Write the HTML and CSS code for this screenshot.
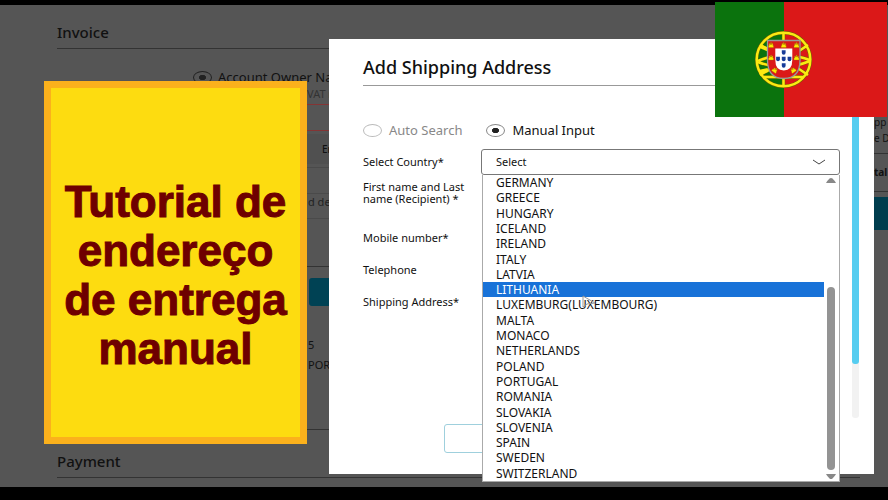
FILE: index.html
```html
<!DOCTYPE html>
<html lang="en">
<head>
<meta charset="utf-8">
<title>Add Shipping Address</title>
<link rel="stylesheet" href="styles.css">
</head>
<body>
<div class="page">
  <main class="checkout">
    <h2 class="section-title">Invoice</h2>
    <form class="invoice">
      <label class="owner"><input class="radio" type="radio" name="owner" checked> Account Owner Name</label>
      <p class="hint">VAT <b>number</b></p>
      <input class="vat" type="text" aria-label="VAT">
      <button class="enter" type="button">Enter</button>
      <div class="box"></div>
      <p class="note">d delivery</p>
      <div class="spacer"></div>
      <button class="primary" type="button" aria-label="Add"></button>
      <address class="address">5<br>PORTUGAL</address>
    </form>
    <h2 class="section-title">Payment</h2>
  </main>
  <aside class="summary">
    <p>pp</p>
    <p>e D</p>
    <p class="total">tal</p>
    <button class="order" type="button" aria-label="Order"></button>
  </aside>
</div>

<section class="modal" role="dialog" aria-labelledby="modal-title">
  <h1 class="modal-title" id="modal-title">Add Shipping Address</h1>
  <form class="shipping">
    <div class="modes">
      <label class="mode mode-off"><input class="radio" type="radio" name="mode"> Auto Search</label>
      <label class="mode"><input class="radio" type="radio" name="mode" checked> Manual Input</label>
    </div>
    <div class="row row-country">
      <label for="country">Select Country*</label>
      <div class="combo">
        <select id="country"><option>Select</option></select>
        <svg class="chevron" viewBox="0 0 14 6" aria-hidden="true"><path d="M1 1l6 4 6-4"/></svg>
        <div class="popup">
          <ul class="options" role="listbox" aria-label="Country">
            <li role="option">GERMANY</li>
            <li role="option">GREECE</li>
            <li role="option">HUNGARY</li>
            <li role="option">ICELAND</li>
            <li role="option">IRELAND</li>
            <li role="option">ITALY</li>
            <li role="option">LATVIA</li>
            <li role="option" class="active" aria-selected="true">LITHUANIA</li>
            <li role="option">LUXEMBURG(LUXEMBOURG)</li>
            <li role="option">MALTA</li>
            <li role="option">MONACO</li>
            <li role="option">NETHERLANDS</li>
            <li role="option">POLAND</li>
            <li role="option">PORTUGAL</li>
            <li role="option">ROMANIA</li>
            <li role="option">SLOVAKIA</li>
            <li role="option">SLOVENIA</li>
            <li role="option">SPAIN</li>
            <li role="option">SWEDEN</li>
            <li role="option">SWITZERLAND</li>
          </ul>
          <div class="scrollbar">
            <svg viewBox="0 0 10 5" aria-hidden="true"><path d="M0 5Q1 3 3.500 .5Q5-.5 6.500 .5Q9 3 10 5z"/></svg>
            <div class="thumb"></div>
            <svg viewBox="0 0 10 5" aria-hidden="true"><path d="M0 0Q1 2 3.500 4.500Q5 5.500 6.500 4.500Q9 2 10 0z"/></svg>
          </div>
          <svg class="cursor" viewBox="0 0 14 13" aria-hidden="true"><path d="M1 1v11l4-3 8-1z"/></svg>
        </div>
      </div>
    </div>
    <p class="row row-name">First name and Last<br>name (Recipient) *</p>
    <p class="row row-mobile">Mobile number*</p>
    <p class="row row-field">Telephone</p>
    <p class="row row-field">Shipping Address*</p>
    <button class="cancel" type="button" aria-label="Cancel"></button>
  </form>
  <div class="modal-scroll"><div class="modal-thumb"></div></div>
</section>

<section class="banner" lang="pt">
  <p>Tutorial de<br>endereço<br>de entrega<br>manual</p>
</section>

<svg class="flag" viewBox="0 0 172 115" role="img" aria-label="Portugal">
  <defs>
    <g id="castle"><path d="M-2.500 2.500v-2h.7v-2h1v1h.5v-2h.7v2h.5v-1h1v2h.6v2z" fill="#ffe900" stroke="#8c7a00" stroke-width=".3"/></g>
    <path id="quina" d="M-1.900-2.200h3.800v2.400q0 2-1.900 2t-1.900-2z"/>
  </defs>
  <path fill="#0b730d" d="M0 0h69v115H0z"/>
  <path fill="#db1818" d="M69 0h103v115H69z"/>
  <g fill="none" stroke="#6b6200" stroke-width="3.400">
    <circle cx="68.500" cy="57.500" r="26.800"/>
    <path d="M68.500 31v53M45 43Q68 56 93 73M45 73Q68 60 93 43M43 59Q68 48 95 58M43 60Q68 70 95 59M48 75h41"/>
  </g>
  <g fill="none" stroke="#fbea12" stroke-width="2.500">
    <circle cx="68.500" cy="57.500" r="26.800"/>
    <path d="M68.500 31v53M45 43Q68 56 93 73M45 73Q68 60 93 43M43 59Q68 48 95 58M43 60Q68 70 95 59M48 75h41"/>
    <path stroke-width="4" d="M45 44l9 4M44 70l9-2"/>
  </g>
  <path d="M52.500 38.500h32.500v19.500q0 18.500-16.250 18.500T52.500 58z" fill="#db1818" stroke="#999" stroke-width="1.300"/>
  <path d="M60.300 46.500h17v11.500q0 10.500-8.500 10.500t-8.500-10.500z" fill="#fff"/>
  <g fill="#173b98">
    <use href="#quina" x="68.700" y="50.500"/>
    <use href="#quina" x="63" y="57"/>
    <use href="#quina" x="68.700" y="57"/>
    <use href="#quina" x="74.500" y="57"/>
    <use href="#quina" x="68.700" y="63.500"/>
  </g>
  <use href="#castle" x="56" y="43"/>
  <use href="#castle" x="68.700" y="43"/>
  <use href="#castle" x="81.500" y="43"/>
  <use href="#castle" x="56" y="55.500"/>
  <use href="#castle" x="81.500" y="55.500"/>
  <use href="#castle" transform="translate(60 68) rotate(35)"/>
  <use href="#castle" transform="translate(78 68) rotate(-35)"/>
</svg>
</body>
</html>
```
FILE: styles.css
```css
* {
  box-sizing: border-box;
}

body {
  margin: 0;
  min-height: 100vh;
  padding: 5px 0 13px;
  display: flex;
  flex-direction: column;
  position: relative;
  overflow: hidden;
  background: #000;
  color: #111;
  font: 11px/16px "Noto Sans", sans-serif;
}

p, ul, h1, h2 {
  margin: 0;
  padding: 0;
}

button, select, input {
  font: inherit;
  color: inherit;
  margin: 0;
}

.radio {
  appearance: none;
  flex: none;
  width: 19px;
  height: 13px;
  border: 1px solid #888;
  border-radius: 50%;
  background: transparent;
}

.radio:checked {
  background: radial-gradient(ellipse 4px 3px, #222 80%, transparent);
}

/* Dimmed checkout page behind the dialog */

.page {
  flex: 1;
  display: flex;
  background: #555;
}

.checkout {
  flex: 1;
  padding: 17px 14px 0 57px;
}

.section-title {
  padding-bottom: 6px;
  border-bottom: 1px solid #333;
  font-size: 15px;
  line-height: 20px;
  font-weight: 500;
}

.invoice {
  height: 381px;
  margin: 0 0 21px;
  padding: 18px 0 0 136px;
  border-bottom: 1px solid #333;
  display: flex;
  flex-direction: column;
}

.owner {
  display: flex;
  align-items: center;
  gap: 6px;
  height: 20px;
  font-size: 13px;
}

.owner .radio {
  border-color: #222;
}

.hint {
  height: 17px;
  padding: 0 0 0 114px;
  line-height: 14px;
  color: #333;
}

.hint b {
  color: #000;
}

.vat {
  height: 27px;
  border: 1px solid #843434;
  background: transparent;
}

.enter {
  height: 30px;
  margin-top: 3px;
  padding: 0 0 0 129px;
  border: 0;
  background: #505050;
  font-size: 10px;
  font-weight: 500;
  text-align: left;
}

.box {
  height: 27px;
  margin-top: 3px;
  border: 1px solid #4a4a4a;
}

.note {
  height: 25px;
  padding: 0 0 0 115px;
  border-bottom: 1px solid #4a4a4a;
  color: #222;
}

.spacer {
  height: 48px;
  border-bottom: 1px solid #333;
}

.primary {
  height: 28px;
  margin: 11px 0 0 116px;
  border: 0;
  border-radius: 3px;
  background: #004254;
}

.address {
  margin: 29px 0 0 115px;
  font-style: normal;
  line-height: 20px;
}

.summary {
  width: 14px;
  padding-top: 109px;
  overflow: hidden;
  font-size: 10px;
  white-space: nowrap;
}

.summary .total {
  height: 39px;
  margin-top: 7px;
  border: 1px solid #333;
  border-width: 1px 0;
  line-height: 36px;
  font-weight: 700;
}

.order {
  display: block;
  width: 100%;
  height: 33px;
  margin-top: 5px;
  border: 0;
  background: #003d4e;
}

/* Dialog */

.modal {
  position: absolute;
  inset: 39px 14px 26px 329px;
  padding: 18px 34px 0;
  background: #fff;
}

.modal-title {
  padding-bottom: 7px;
  border-bottom: 1px solid #999;
  font-size: 18px;
  line-height: 21px;
  font-weight: 500;
}

.modes {
  display: flex;
  gap: 24px;
  padding-top: 35px;
}

.mode {
  display: flex;
  align-items: center;
  gap: 7px;
  height: 18px;
  font-size: 13px;
}

.mode-off {
  color: #888;
}

.mode-off .radio {
  border-color: #bbb;
}

.row {
  font-size: 11px;
  line-height: 12px;
}

.row-country {
  display: grid;
  grid-template-columns: 118px 1fr;
  align-items: center;
  margin-top: 10px;
}

.combo {
  position: relative;
}

.combo select {
  display: block;
  width: 100%;
  height: 26px;
  padding: 0 14px;
  appearance: none;
  border: 1px solid #777;
  border-radius: 3px;
  background: #fff;
}

.chevron {
  position: absolute;
  top: 10px;
  right: 14px;
  width: 14px;
  height: 6px;
  fill: none;
  stroke: #444;
}

.popup {
  position: absolute;
  top: 26px;
  left: 1px;
  right: 0;
  height: 307px;
  display: flex;
  gap: 2px;
  padding-right: 3px;
  border: 1px solid #aaa;
  border-top: 0;
  background: #fff;
}

.options {
  flex: 1;
  display: grid;
  grid-auto-rows: 1fr;
  list-style: none;
  font-size: 12px;
  line-height: 15px;
}

.options li {
  padding-left: 13px;
}

.options .active {
  background: #1872d8;
  color: #fff;
}

.scrollbar {
  width: 10px;
  padding: 3px 0 2px;
  display: flex;
  flex-direction: column;
}

.scrollbar svg {
  width: 10px;
  height: 5px;
  fill: #888;
}

.thumb {
  flex: 1;
  margin: 104px 1px 4px;
  border-radius: 4px;
  background: #939393;
}

.cursor {
  position: absolute;
  left: 99px;
  top: 120px;
  width: 14px;
  height: 13px;
  fill: none;
  stroke: #999;
}

.row-name {
  margin-top: 6px;
}

.row-mobile {
  margin-top: 27px;
}

.row-field {
  margin-top: 20px;
}

.cancel {
  display: block;
  width: 120px;
  height: 29px;
  margin: 116px 0 0 81px;
  border: 1px solid #9fd0dd;
  border-radius: 3px;
  background: #fff;
}

.modal-scroll {
  position: absolute;
  top: 40px;
  right: 15px;
  bottom: 56px;
  width: 7px;
  border-radius: 3px;
  background: #f2f2f2;
}

.modal-thumb {
  height: 84%;
  border-radius: 3px;
  background: #56cdf0;
}

/* Promo banner and flag */

.banner {
  position: absolute;
  top: 81px;
  left: 44px;
  width: 263px;
  height: 363px;
  display: flex;
  align-items: center;
  justify-content: center;
  padding-top: 24px;
  border: 7px solid #fbb11c;
  background: #fddc10;
  color: #6e0000;
  font: 700 44px/49px "Liberation Sans", sans-serif;
  text-align: center;
  white-space: nowrap;
  -webkit-text-stroke: 1px #6e0000;
}

.flag {
  position: absolute;
  top: 2px;
  right: 1px;
  width: 172px;
  height: 115px;
}
```
